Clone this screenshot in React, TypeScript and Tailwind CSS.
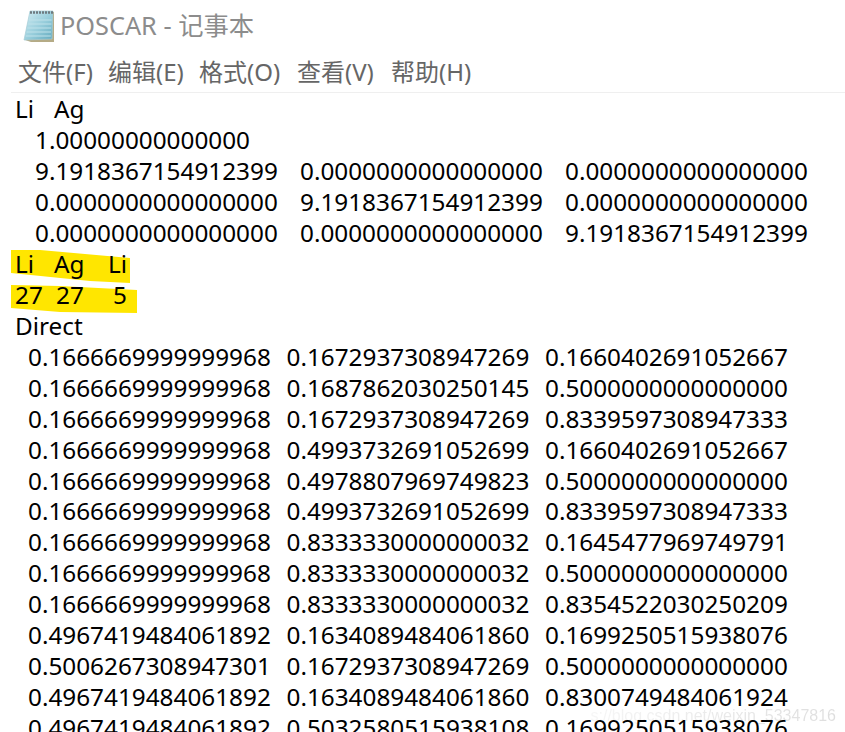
const lattice = [
  ["9.1918367154912399", "0.0000000000000000", "0.0000000000000000"],
  ["0.0000000000000000", "9.1918367154912399", "0.0000000000000000"],
  ["0.0000000000000000", "0.0000000000000000", "9.1918367154912399"],
];

const coords = [
  ["0.1666669999999968", "0.1672937308947269", "0.1660402691052667"],
  ["0.1666669999999968", "0.1687862030250145", "0.5000000000000000"],
  ["0.1666669999999968", "0.1672937308947269", "0.8339597308947333"],
  ["0.1666669999999968", "0.4993732691052699", "0.1660402691052667"],
  ["0.1666669999999968", "0.4978807969749823", "0.5000000000000000"],
  ["0.1666669999999968", "0.4993732691052699", "0.8339597308947333"],
  ["0.1666669999999968", "0.8333330000000032", "0.1645477969749791"],
  ["0.1666669999999968", "0.8333330000000032", "0.5000000000000000"],
  ["0.1666669999999968", "0.8333330000000032", "0.8354522030250209"],
  ["0.4967419484061892", "0.1634089484061860", "0.1699250515938076"],
  ["0.5006267308947301", "0.1672937308947269", "0.5000000000000000"],
  ["0.4967419484061892", "0.1634089484061860", "0.8300749484061924"],
  ["0.4967419484061892", "0.5032580515938108", "0.1699250515938076"],
];

const menus = [
  { label: "文件(F)", width: "w-[90px]" },
  { label: "编辑(E)", width: "w-[91px]" },
  { label: "格式(O)", width: "w-[98px]" },
  { label: "查看(V)", width: "w-[94px]" },
  { label: "帮助(H)", width: "w-[82px]" },
];

function NotepadIcon() {
  return (
    <svg width="32" height="34" viewBox="0 0 32 34" className="shrink-0">
      <defs>
        <linearGradient id="page" x1="0" y1="0" x2="1" y2="1">
          <stop offset="0" stopColor="#d3edf3" />
          <stop offset="0.55" stopColor="#97cddb" />
          <stop offset="1" stopColor="#62a9bd" />
        </linearGradient>
      </defs>
      <path d="M8 3 L31 3 L31 33 L8 33 L2 31 Z" fill="#b5ab86" />
      <path d="M7 2 L30 2 L29 30 L1 31 Z" fill="url(#page)" stroke="#a5cbd5" strokeWidth="0.7" />
      <path d="M7 3.5 L30 3.5" stroke="#6d7a80" strokeWidth="2.4" strokeDasharray="2 1" />
      <path d="M6 11 L28.6 11 M5.2 15 L28.4 15 M4.4 19 L28.2 19 M3.6 23 L28 23 M2.8 27 L27.8 27" stroke="#bfe2ea" strokeWidth="1" />
    </svg>
  );
}

function Row({ values, tall }: { values: string[]; tall?: boolean }) {
  return (
    <div className={`flex h-[30.95px] items-center ${tall ? "pl-[20px]" : "pl-[13px]"}`}>
      {values.map((v, i) => (
        <span key={i} className={`shrink-0 ${tall ? "w-[265px]" : "w-[258.5px]"}`}>
          {v}
        </span>
      ))}
    </div>
  );
}

export default function App() {
  return (
    <div className="relative h-[732px] w-[845px] overflow-hidden bg-white font-['Noto_Sans','Noto_Sans_CJK_SC',sans-serif] text-black">
      <div className="absolute right-[9px] top-[704px] bg-gradient-to-r from-[#f6f6f6] to-[#dedede] bg-clip-text font-['Liberation_Sans',sans-serif] text-[16px] text-transparent">
        s://blog.csdn.net/weixin_53347816
      </div>

      <div className="flex h-[51px] items-center gap-[5px] pl-[23px] text-[25.3px] text-[#8c8c8c]">
        <NotepadIcon />
        <span>POSCAR - 记事本</span>
      </div>

      <div className="flex h-[41px] items-center pl-[18px] text-[24px] text-[#666666]">
        {menus.map((m) => (
          <span key={m.label} className={m.width}>
            {m.label}
          </span>
        ))}
      </div>
      <div className="ml-[11px] h-[1px] bg-[#efefef]" />

      <div className="relative pl-[15px] pt-[1px] text-[24.3px]">
        {/* marker highlights */}
        <svg width="150" height="72" viewBox="0 0 150 72" className="absolute left-0 top-[156px]">
          <path d="M11 1 L40 1 L130 9 L130 34 L90 32 L11 24 Z" fill="#ffe600" />
          <path d="M11 36 L60 37 L137 41 L137 64 L60 63 L11 59 Z" fill="#ffe600" />
        </svg>

        <div className="relative">
          <div className="flex h-[30.95px] items-center">
            <span className="w-[39px]">Li</span>
            <span>Ag</span>
          </div>
          <div className="flex h-[30.95px] items-center pl-[20px]">1.00000000000000</div>
          {lattice.map((r, i) => (
            <Row key={i} values={r} tall />
          ))}
          <div className="flex h-[30.95px] items-center">
            <span className="w-[39px]">Li</span>
            <span className="w-[54px]">Ag</span>
            <span>Li</span>
          </div>
          <div className="flex h-[30.95px] items-center">
            <span className="w-[41px]">27</span>
            <span className="w-[57px]">27</span>
            <span>5</span>
          </div>
          <div className="flex h-[30.95px] items-center">Direct</div>
          {coords.map((r, i) => (
            <Row key={i} values={r} />
          ))}
        </div>
      </div>
    </div>
  );
}
